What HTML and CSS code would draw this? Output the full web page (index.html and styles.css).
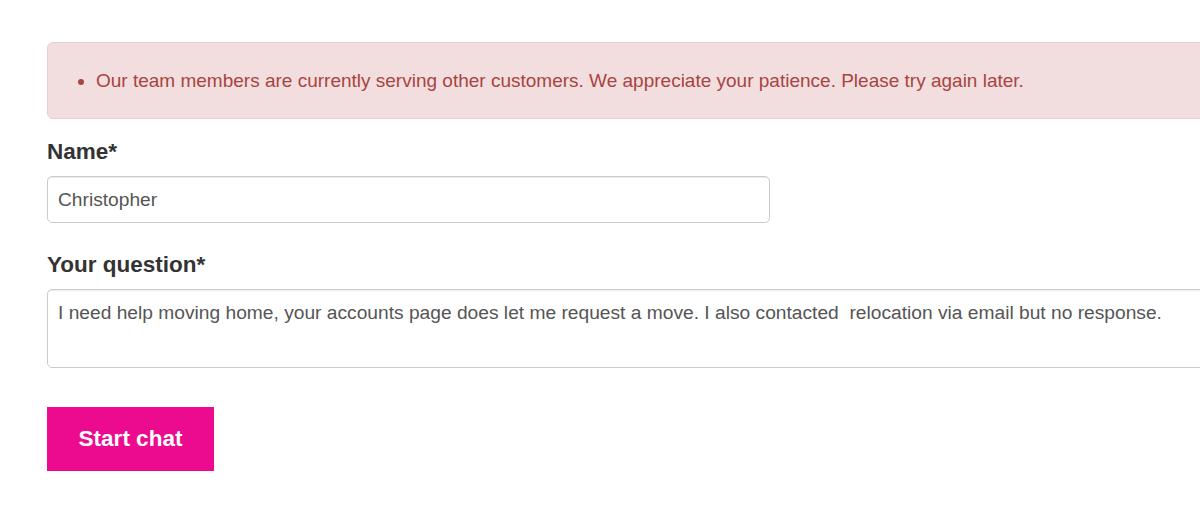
FILE: index.html
```html
<!DOCTYPE html>
<html lang="en">
  <head>
    <meta charset="UTF-8">
    <meta name="viewport" content="width=device-width, initial-scale=1.0">
    <title>Start chat</title>
    <link rel="stylesheet" href="styles.css">
  </head>
  <body>
    <div class="chat-form">
      <div class="alert">
        <ul>
          <li>Our team members are currently serving other customers. We appreciate your patience. Please try again later.</li>
        </ul>
      </div>

      <div class="form-group">
        <label for="name">Name*</label>
        <input type="text" id="name" class="name-input" value="Christopher">
      </div>

      <div class="form-group">
        <label for="question">Your question*</label>
        <textarea id="question" rows="2">I need help moving home, your accounts page does let me request a move. I also contacted  relocation via email but no response.</textarea>
      </div>

      <button type="submit">Start chat</button>
    </div>
  </body>
</html>
```

FILE: styles.css
```css
html, body {
  margin: 0;
  padding: 0;
  overflow: hidden;
}

body {
  font-family: "Liberation Sans", Arial, sans-serif;
  color: #333;
  background-color: #fff;
}

.chat-form {
  width: 1180px;
  padding: 42px 0 0 47px;
}

.alert {
  background-color: #f2dede;
  border: 1px solid #ebccd1;
  border-radius: 6px;
  color: #a94442;
  font-size: 19px;
  padding: 26px 0 25px;
  margin-bottom: 20px;
}

.alert ul {
  margin: 0;
  padding-left: 48px;
}

.alert li {
  line-height: 24px;
}

.form-group {
  margin-bottom: 29px;
}

.form-group label {
  display: block;
  font-weight: bold;
  font-size: 22.5px;
  line-height: 26px;
  margin-bottom: 11px;
}

.form-group input,
.form-group textarea {
  display: block;
  box-sizing: border-box;
  font-family: "Liberation Sans", Arial, sans-serif;
  font-size: 19.2px;
  color: #555;
  border: 1px solid #ccc;
  border-radius: 5px;
  box-shadow: inset 0 1px 1px rgba(0,0,0,0.075);
  padding: 0 10px;
}

.name-input {
  width: 723px;
  height: 47px;
}

.form-group textarea {
  width: 100%;
  height: 79px;
  padding-top: 11px;
  line-height: 24px;
  resize: none;
}

button {
  display: block;
  margin-top: 39px;
  width: 167px;
  height: 64px;
  background-color: #ec0b8f;
  color: #fff;
  border: none;
  font-family: "Liberation Sans", Arial, sans-serif;
  font-weight: bold;
  font-size: 22.5px;
  cursor: pointer;
}
```
